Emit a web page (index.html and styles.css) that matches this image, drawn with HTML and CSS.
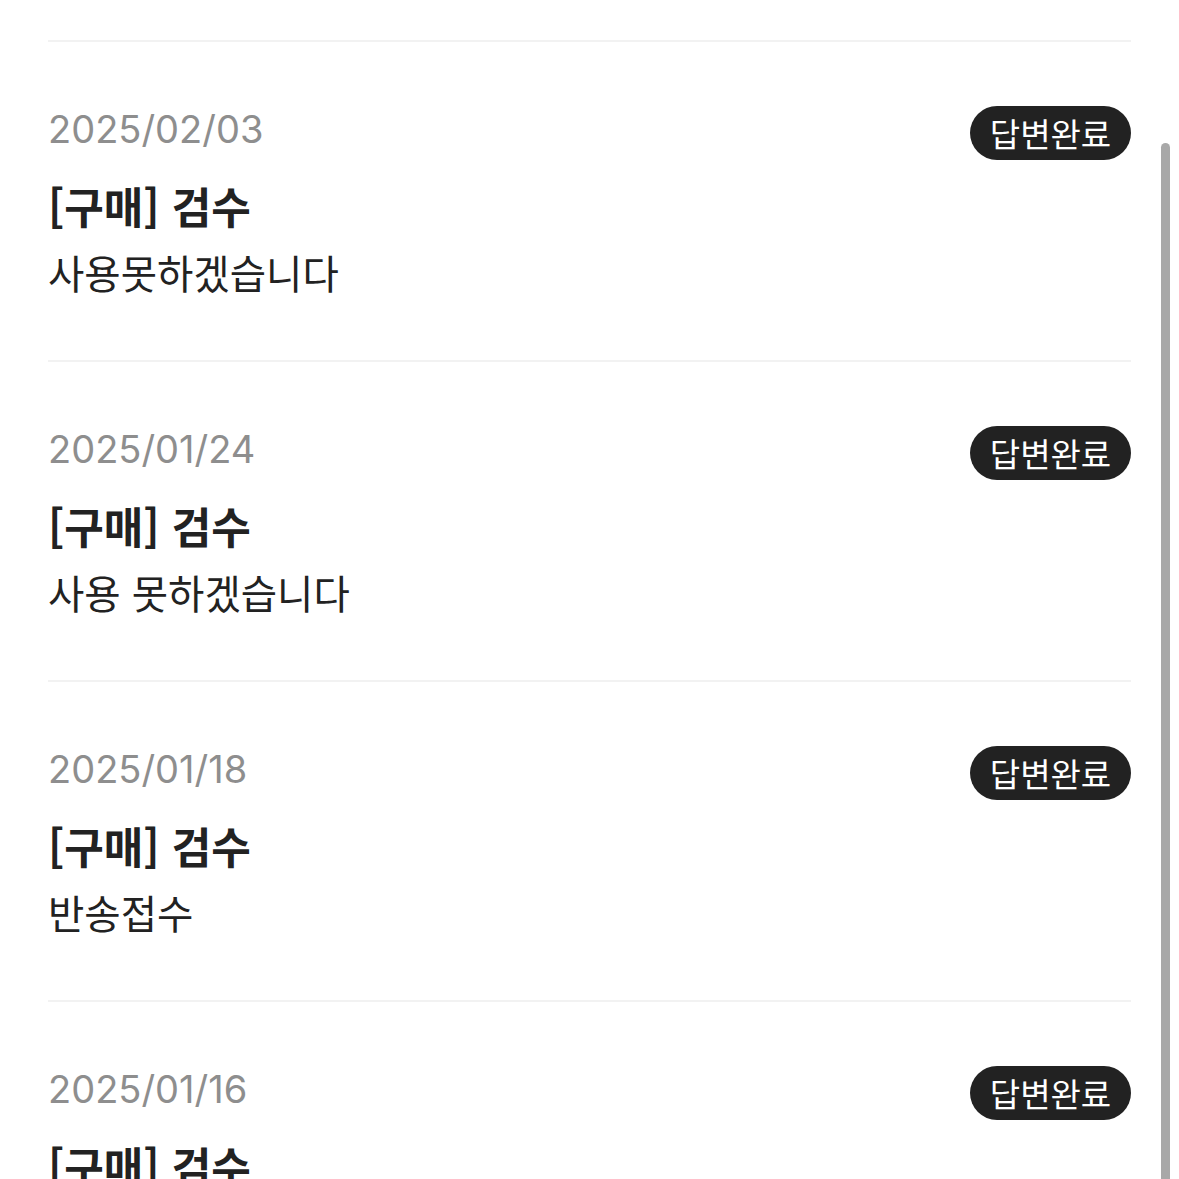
FILE: index.html
```html
<!DOCTYPE html>
<html lang="ko">
<head>
    <meta charset="UTF-8">
    <title>문의내역</title>
    <link rel="stylesheet" href="styles.css">
</head>
<body>
    <div id="list">
        <!--문의 1-->
        <div class="item">
            <div class="head">
                <span class="date">2025/02/03</span>
                <span class="badge">답변완료</span>
            </div>
            <p class="title">[구매] 검수</p>
            <p class="desc">사용못하겠습니다</p>
        </div>
        <!--문의 2-->
        <div class="item">
            <div class="head">
                <span class="date">2025/01/24</span>
                <span class="badge">답변완료</span>
            </div>
            <p class="title">[구매] 검수</p>
            <p class="desc">사용 못하겠습니다</p>
        </div>
        <!--문의 3-->
        <div class="item">
            <div class="head">
                <span class="date">2025/01/18</span>
                <span class="badge">답변완료</span>
            </div>
            <p class="title">[구매] 검수</p>
            <p class="desc">반송접수</p>
        </div>
        <!--문의 4-->
        <div class="item">
            <div class="head">
                <span class="date">2025/01/16</span>
                <span class="badge">답변완료</span>
            </div>
            <p class="title">[구매] 검수</p>
            <p class="desc">반송접수</p>
        </div>
    </div>
    <div id="scrollbar"></div>
</body>
</html>
```

FILE: styles.css
```css
*{
    margin: 0;
    padding: 0;
    box-sizing: border-box;
}
html, body{
    height: 100%;
    overflow: hidden;
}
body{
    background: #fff;
    font-family: Inter, "Noto Sans CJK KR", sans-serif;
    color: #222;
}
#list{
    padding: 40px 48px 0;
}
.item{
    border-top: 2px solid #f2f2f2;
    height: 320px;
    padding-top: 64px;
}
.head{
    display: flex;
    justify-content: space-between;
    align-items: center;
    height: 54px;
}
.date{
    padding-bottom: 8px;
    font-size: 38px;
    color: #8e8e8e;
}
.badge{
    display: flex;
    align-items: center;
    justify-content: center;
    width: 161px;
    height: 54px;
    border-radius: 27px;
    background: #222;
    color: #fff;
    font-family: "Noto Sans CJK KR", sans-serif;
    font-size: 33px;
}
.title{
    margin-top: 16px;
    font-family: "Noto Sans CJK KR", sans-serif;
    font-weight: 700;
    font-size: 43px;
    line-height: 58px;
}
.desc{
    margin-top: 10px;
    font-family: "Noto Sans CJK KR", sans-serif;
    font-size: 39.5px;
    line-height: 56px;
}
#scrollbar{
    position: absolute;
    top: 143px;
    left: 1161px;
    width: 9px;
    height: 1100px;
    border-radius: 5px;
    background: #a8a8a8;
}
```
